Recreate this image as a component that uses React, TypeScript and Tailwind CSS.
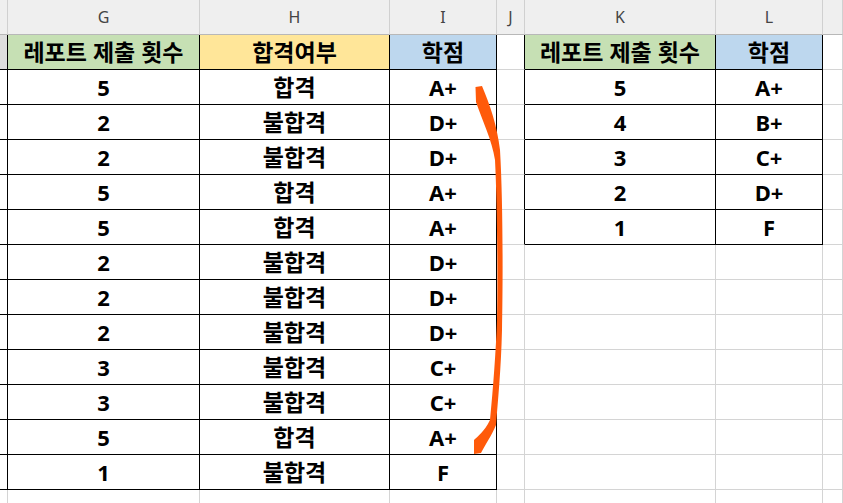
const cols = ['', 'G', 'H', 'I', 'J', 'K', 'L', ''];

const rows = [
  { n: '5', pass: '합격', grade: 'A+' },
  { n: '2', pass: '불합격', grade: 'D+' },
  { n: '2', pass: '불합격', grade: 'D+' },
  { n: '5', pass: '합격', grade: 'A+' },
  { n: '5', pass: '합격', grade: 'A+' },
  { n: '2', pass: '불합격', grade: 'D+' },
  { n: '2', pass: '불합격', grade: 'D+' },
  { n: '2', pass: '불합격', grade: 'D+' },
  { n: '3', pass: '불합격', grade: 'C+' },
  { n: '3', pass: '불합격', grade: 'C+' },
  { n: '5', pass: '합격', grade: 'A+' },
  { n: '1', pass: '불합격', grade: 'F' },
];

const lookup = [
  { n: '5', grade: 'A+' },
  { n: '4', grade: 'B+' },
  { n: '3', grade: 'C+' },
  { n: '2', grade: 'D+' },
  { n: '1', grade: 'F' },
];

const grid = 'grid grid-cols-[8px_192px_190px_107px_28px_191px_107px_20px]';
const cell = 'h-[35px] flex items-center justify-center border-r border-b';
const black = 'border-black';
const gray = 'border-[#d4d4d4]';
const ko = 'text-[23px]';

export default function App() {
  return (
    <div className="relative w-[843px] h-[503px] overflow-hidden bg-white font-['Noto_Sans','Noto_Sans_CJK_KR',sans-serif] text-black">
      {/* column letters */}
      <div className={`${grid} bg-[#efefef] text-[16px] text-[#444]`}>
        {cols.map((c, i) => (
          <div key={i} className="h-[35px] flex items-center justify-center border-r border-b border-r-[#d0d0d0] border-b-[#b8b8b8]">
            {c}
          </div>
        ))}
      </div>

      {/* table headers */}
      <div className={`${grid} text-[22px] font-bold`}>
        <div className={`${cell} ${black} bg-[#dedede]`} />
        <div className={`${cell} ${black} ${ko} bg-[#c6e0b4]`}>레포트 제출 횟수</div>
        <div className={`${cell} ${black} ${ko} bg-[#ffe699]`}>합격여부</div>
        <div className={`${cell} ${black} ${ko} bg-[#bdd7ee]`}>학점</div>
        <div className={`${cell} border-r-black border-b-[#d4d4d4]`} />
        <div className={`${cell} ${black} ${ko} bg-[#c6e0b4]`}>레포트 제출 횟수</div>
        <div className={`${cell} ${black} ${ko} bg-[#bdd7ee]`}>학점</div>
        <div className={`${cell} ${gray}`} />
      </div>

      {rows.map((r, i) => {
        const k = lookup[i];
        return (
          <div key={i} className={`${grid} text-[22px] font-bold`}>
            <div className={`${cell} ${black}`} />
            <div className={`${cell} ${black}`}>{r.n}</div>
            <div className={`${cell} ${black} ${ko}`}>{r.pass}</div>
            <div className={`${cell} ${black}`}>{r.grade}</div>
            <div className={`${cell} border-b-[#d4d4d4] ${k ? 'border-r-black' : 'border-r-[#d4d4d4]'}`} />
            <div className={`${cell} ${k ? black : gray}`}>{k?.n}</div>
            <div className={`${cell} ${k ? black : gray}`}>{k?.grade}</div>
            <div className={`${cell} ${gray}`} />
          </div>
        );
      })}

      <div className={grid}>
        {cols.map((_, i) => (
          <div key={i} className={`${cell} ${gray}`} />
        ))}
      </div>

      {/* hand-drawn marker stroke */}
      <svg className="absolute inset-0 pointer-events-none" width="843" height="503" viewBox="0 0 843 503">
        <path
          d="M475.5 87 L482 86 C490 105 497 125 500 150 C503 200 503 280 502 330 C501 370 498 400 496 425 C492 435 485 445 481 453 L474 454 L474 440 C478 436 484 432 490 420 C493 390 496 350 497 320 C498 270 497 200 495 160 C492 140 482 120 476 102 Z"
          fill="#ff5a0a"
        />
      </svg>
    </div>
  );
}
